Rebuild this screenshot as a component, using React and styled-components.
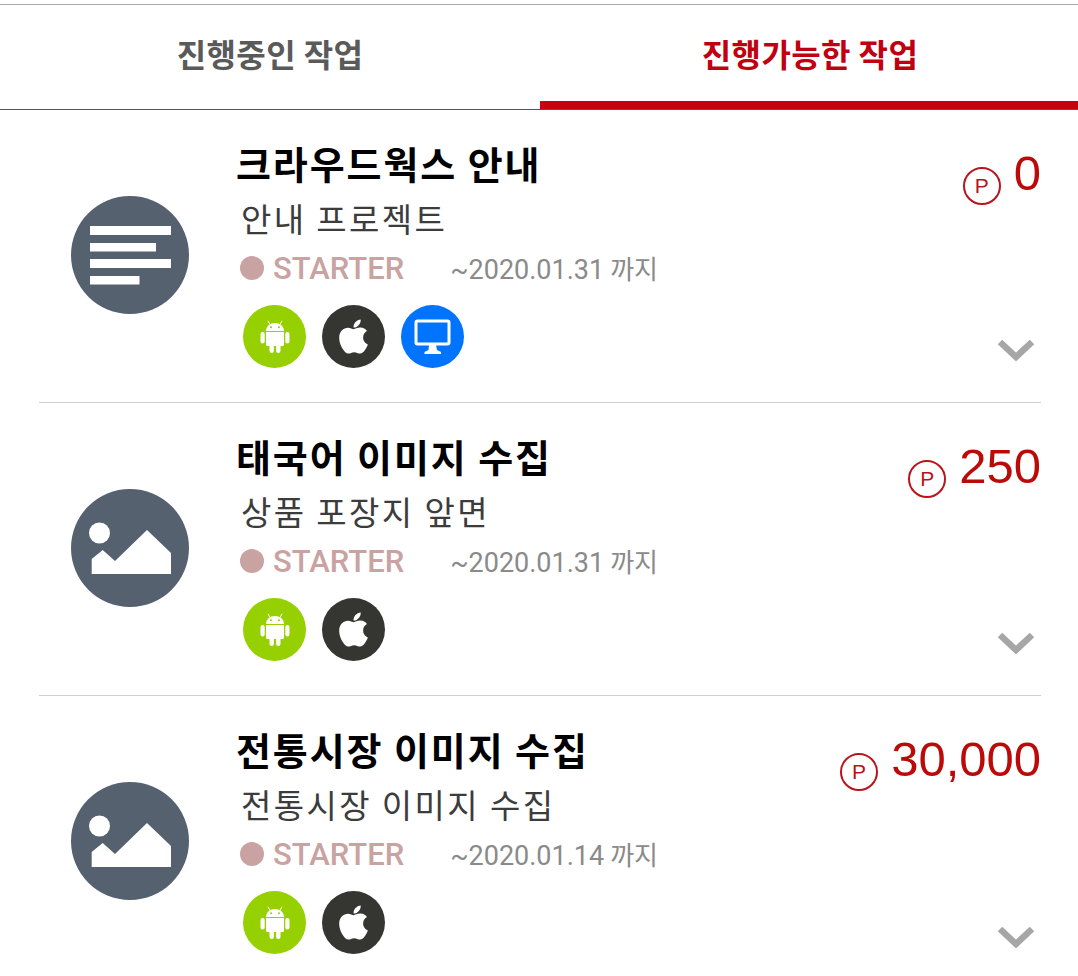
import styled, {createGlobalStyle} from 'styled-components';
import {FaApple} from 'react-icons/fa';

const tasks = [
	{
		title: '크라우드웍스 안내',
		sub: '안내 프로젝트',
		points: '0',
		date: '~2020.01.31',
		kind: 'doc',
		platforms: ['android', 'apple', 'web'],
	},
	{
		title: '태국어 이미지 수집',
		sub: '상품 포장지 앞면',
		points: '250',
		date: '~2020.01.31',
		kind: 'image',
		platforms: ['android', 'apple'],
	},
	{
		title: '전통시장 이미지 수집',
		sub: '전통시장 이미지 수집',
		points: '30,000',
		date: '~2020.01.14',
		kind: 'image',
		platforms: ['android', 'apple'],
	},
];

function DocIcon() {
	return (
		<svg width="118" height="118" viewBox="0 0 118 118">
			<rect x="19" y="30" width="81" height="9" fill="#fff" />
			<rect x="19" y="47" width="66" height="8.5" fill="#fff" />
			<rect x="19" y="63" width="81" height="9" fill="#fff" />
			<rect x="19" y="80" width="49.5" height="8.5" fill="#fff" />
		</svg>
	);
}

function ImageIcon() {
	return (
		<svg width="118" height="118" viewBox="0 0 118 118">
			<circle cx="28.5" cy="44" r="10.5" fill="#fff" />
			<path d="M20.7 70 L31.7 61 L44 72 L76 41 L100 64 V85 H20.7 Z" fill="#fff" />
		</svg>
	);
}

function AndroidIcon() {
	return (
		<svg width="30" height="33" viewBox="0 0 30 33">
			<path d="M6 11 C6 6.5 10 3 15 3 C20 3 24 6.5 24 11 Z" fill="#fff" />
			<path d="M10 4.5 L8 0.8 M20 4.5 L22 0.8" stroke="#fff" strokeWidth="1" />
			<circle cx="11" cy="7.3" r="1" fill="#96d000" />
			<circle cx="19" cy="7.3" r="1" fill="#96d000" />
			<path d="M6 12 H24 V24.5 A1.5 1.5 0 0 1 22.5 26 H7.5 A1.5 1.5 0 0 1 6 24.5 Z" fill="#fff" />
			<rect x="0.5" y="12" width="4.2" height="11.5" rx="2.1" fill="#fff" />
			<rect x="25.3" y="12" width="4.2" height="11.5" rx="2.1" fill="#fff" />
			<rect x="9.5" y="24" width="4.4" height="9" rx="2.2" fill="#fff" />
			<rect x="16.1" y="24" width="4.4" height="9" rx="2.2" fill="#fff" />
		</svg>
	);
}

function DesktopIcon() {
	return (
		<svg width="38" height="36" viewBox="0 0 38 36">
			<rect x="2" y="2" width="33" height="23" rx="1.5" fill="none" stroke="#fff" strokeWidth="3" />
			<path d="M15 26 H22 L23 31 L27 33 V35 H10.5 V33 L14.5 31 Z" fill="#fff" />
		</svg>
	);
}

function Chevron() {
	return (
		<svg width="38" height="22" viewBox="0 0 38 22">
			<path d="M3 3 L19 18 L35 3" fill="none" stroke="#a6a6a6" strokeWidth="6.5" />
		</svg>
	);
}

function PlatformIcon({type}) {
	if (type === 'android') {
		return (
			<Platform $bg="#96d000">
				<AndroidIcon />
			</Platform>
		);
	}
	if (type === 'apple') {
		return (
			<Platform $bg="#353532">
				<FaApple size={39} color="#fff" />
			</Platform>
		);
	}
	return (
		<Platform $bg="#0074ff">
			<DesktopIcon />
		</Platform>
	);
}

export default function App() {
	return (
		<Page>
			<GlobalStyle />
			<Tabs>
				<Tab>진행중인 작업</Tab>
				<Tab $active>진행가능한 작업</Tab>
			</Tabs>
			{tasks.map((task) => (
				<Row key={task.title}>
					<Thumb>{task.kind === 'doc' ? <DocIcon /> : <ImageIcon />}</Thumb>
					<Info>
						<Title>{task.title}</Title>
						<Sub>{task.sub}</Sub>
						<Meta>
							<Dot />
							<Level>STARTER</Level>
							<DateText>
								{task.date}
								<Until>까지</Until>
							</DateText>
						</Meta>
						<Platforms>
							{task.platforms.map((p) => (
								<PlatformIcon key={p} type={p} />
							))}
						</Platforms>
					</Info>
					<Side>
						<Points>
							<PointMark>P</PointMark>
							<Amount>{task.points}</Amount>
						</Points>
						<ChevronWrap>
							<Chevron />
						</ChevronWrap>
					</Side>
				</Row>
			))}
		</Page>
	);
}

const GlobalStyle = createGlobalStyle`
	html, body {
		margin: 0;
		height: 976px;
		overflow: hidden;
		background: #fff;
	}
	* {
		box-sizing: border-box;
	}
`;

const Page = styled.div`
	width: 1078px;
	padding-top: 4px;
	font-family: 'Noto Sans CJK KR', 'Liberation Sans', sans-serif;
`;

const Tabs = styled.div`
	display: flex;
	height: 106px;
	border-top: 1px solid #a8a8a8;
	border-bottom: 1px solid #555;
`;

const Tab = styled.div`
	flex: none;
	width: ${(p) => (p.$active ? '538px' : '540px')};
	display: flex;
	align-items: center;
	justify-content: center;
	height: 104px;
	padding-left: ${(p) => (p.$active ? '2px' : '0')};
	padding-bottom: ${(p) => (p.$active ? '0' : '8px')};
	border-bottom: ${(p) => (p.$active ? '8px solid #c80012' : 'none')};
	color: ${(p) => (p.$active ? '#c00010' : '#5a5a5a')};
	font-size: 32px;
	font-weight: 700;
	letter-spacing: 0.4px;
`;

const Row = styled.div`
	display: flex;
	height: 293px;
	margin: 0 37px 0 39px;
	padding-left: 32px;
	border-bottom: 1px solid #d0d0d0;

	&:last-child {
		border-bottom: none;
	}
`;

const Thumb = styled.div`
	flex: none;
	width: 118px;
	height: 118px;
	margin-top: 86px;
	border-radius: 50%;
	background: #566170;
`;

const Info = styled.div`
	flex: 1;
	display: flex;
	flex-direction: column;
	margin-left: 47px;
	padding-top: 22px;
`;

const Title = styled.div`
	color: #000;
	font-size: 38px;
	font-weight: 700;
	line-height: 62px;
	letter-spacing: 1.9px;
`;

const Sub = styled.div`
	margin-top: 2px;
	margin-left: 5px;
	color: #3c3c3c;
	font-size: 33px;
	font-weight: 400;
	line-height: 44px;
	letter-spacing: 2.4px;
`;

const Meta = styled.div`
	display: flex;
	align-items: center;
	height: 48px;
	margin-left: 4px;
	margin-top: 4px;
`;

const Dot = styled.span`
	width: 24px;
	height: 24px;
	border-radius: 50%;
	background: #c9a2a2;
`;

const Level = styled.span`
	margin-left: 9px;
	color: #c9a2a2;
	font-family: Roboto, 'Liberation Sans', sans-serif;
	font-size: 31px;
	font-weight: 500;
`;

const DateText = styled.span`
	margin-left: 46px;
	margin-bottom: 2px;
	color: #8a8a8a;
	font-family: Roboto, 'Liberation Sans', sans-serif;
	font-size: 27px;
`;

const Until = styled.span`
	margin-left: 6px;
	font-family: 'Noto Sans CJK KR', sans-serif;
	font-size: 26px;
`;

const Platforms = styled.div`
	display: flex;
	gap: 16px;
	margin-left: 7px;
	margin-top: 13px;
`;

const Platform = styled.span`
	display: flex;
	align-items: center;
	justify-content: center;
	width: 63px;
	height: 63px;
	border-radius: 50%;
	background: ${(p) => p.$bg};
`;

const Side = styled.div`
	display: flex;
	flex-direction: column;
	align-items: flex-end;
	justify-content: space-between;
	padding-top: 34px;
	padding-bottom: 41px;
`;

const Points = styled.div`
	display: flex;
	align-items: flex-start;
	gap: 13px;
`;

const PointMark = styled.span`
	display: flex;
	align-items: center;
	justify-content: center;
	width: 38px;
	height: 38px;
	margin-top: 23px;
	border: 2px solid #b8141c;
	border-radius: 50%;
	color: #b8141c;
	font-family: 'Liberation Sans', sans-serif;
	font-size: 21px;
`;

const Amount = styled.span`
	margin-top: 1px;
	color: #bb0a0a;
	font-family: 'Liberation Sans', sans-serif;
	font-size: 49px;
	line-height: 56px;
`;

const ChevronWrap = styled.span`
	display: block;
	height: 22px;
	margin-right: 6px;
`;
